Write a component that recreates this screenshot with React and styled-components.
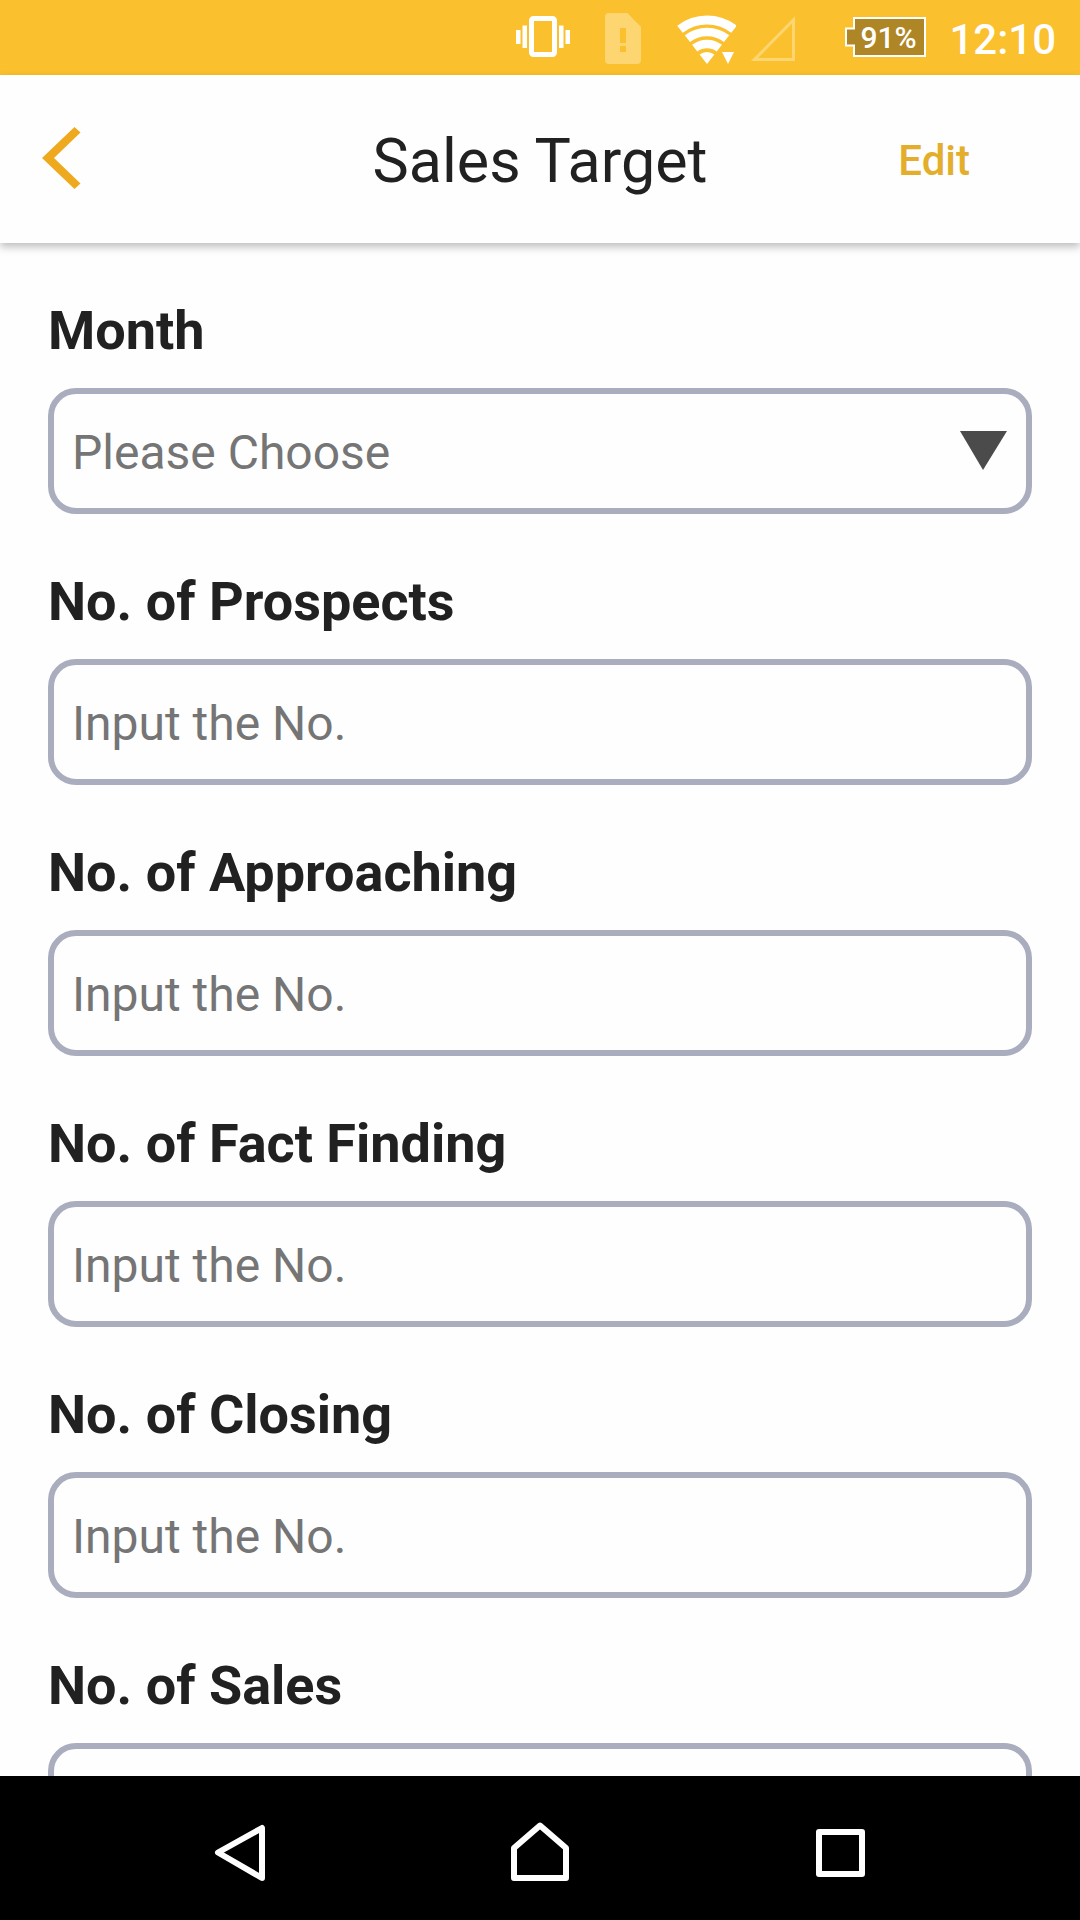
import React from 'react';
import styled, { createGlobalStyle } from 'styled-components';

const GlobalStyle = createGlobalStyle`
  *, *::before, *::after { box-sizing: border-box; }
  body {
    margin: 0;
    background: #fefefe;
    color: #212121;
    font-family: Roboto, "Liberation Sans", sans-serif;
  }
`;

const Screen = styled.div`
  display: flex;
  flex-direction: column;
  height: 100vh;
`;

const StatusBar = styled.div`
  flex: none;
  display: flex;
  align-items: center;
  justify-content: flex-end;
  gap: 10px;
  height: 75px;
  padding-right: 24px;
  background: #fbc02d;
  color: #fff;
`;

const StatusIcon = styled.svg`
  display: block;
  flex: none;
  height: 75px;
`;

const Battery = styled.div`
  position: relative;
  flex: none;
  display: flex;
  align-items: center;
  width: 109px;
  height: 75px;
  padding-left: 30px;
  font-size: 30px;
  font-weight: 500;
  line-height: 36px;
`;

const BatteryShape = styled.svg`
  position: absolute;
  inset: 0;
`;

const BatteryLevel = styled.span`
  position: relative;
`;

const Clock = styled.time`
  padding-top: 4px;
  font-size: 42px;
  font-weight: 500;
  line-height: 48px;
`;

const Header = styled.header`
  position: relative;
  z-index: 1;
  flex: none;
  display: grid;
  grid-template-columns: 1fr auto 1fr;
  align-items: center;
  height: 168px;
  padding-top: 4px;
  background: #fefefe;
  box-shadow: 0 4px 8px rgba(0, 0, 0, 0.25);
`;

const BackButton = styled.button`
  justify-self: start;
  margin-left: 24px;
  padding: 0;
  border: 0;
  background: none;
  svg { display: block; }
`;

const Title = styled.h1`
  margin: 0;
  font-size: 61px;
  font-weight: 400;
  line-height: 72px;
`;

const EditButton = styled.button`
  justify-self: end;
  margin-right: 110px;
  padding: 0;
  border: 0;
  background: none;
  color: #e3ae2b;
  font: 500 42px/48px Roboto, "Liberation Sans", sans-serif;
`;

const Form = styled.form`
  flex: 1;
  min-height: 0;
  display: flex;
  flex-direction: column;
  gap: 56px;
  padding: 56px 48px;
  overflow-y: auto;
  scrollbar-width: none;
`;

const Field = styled.div`
  flex: none;
  display: flex;
  flex-direction: column;
  gap: 25px;
`;

const Label = styled.label`
  font-size: 54px;
  font-weight: 700;
  line-height: 64px;
`;

const controlStyle = `
  display: block;
  width: 100%;
  height: 126px;
  margin: 0;
  border: 6px solid #a9adbd;
  border-radius: 28px;
  background: transparent;
  font: 400 48px/56px Roboto, "Liberation Sans", sans-serif;
  outline: none;
`;

const Input = styled.input`
  ${controlStyle}
  padding: 2px 18px 0;
  color: #212121;
  &::placeholder { color: #757575; opacity: 1; }
`;

const SelectBox = styled.div`
  position: relative;
`;

const Select = styled.select`
  ${controlStyle}
  padding: 4px 18px 0;
  appearance: none;
  color: #757575;
`;

const SelectArrow = styled.svg`
  position: absolute;
  top: 43px;
  right: 24px;
  pointer-events: none;
`;

const NavBar = styled.nav`
  flex: none;
  display: flex;
  height: 144px;
  padding: 0 90px;
  background: #000;
`;

const NavButton = styled.button`
  flex: 1;
  display: flex;
  align-items: center;
  justify-content: center;
  padding: 0;
  border: 0;
  background: none;
`;

const navIcons = [
  { name: 'Back', d: 'M14 40.5 58 16V66Z' },
  { name: 'Home', d: 'M10 36 36 13.5 62 36V66H10Z' },
  { name: 'Recent apps', d: 'M15 20H58V62H15Z' },
];

const countFields = [
  { id: 'prospects', label: 'No. of Prospects' },
  { id: 'approaching', label: 'No. of Approaching' },
  { id: 'fact-finding', label: 'No. of Fact Finding' },
  { id: 'closing', label: 'No. of Closing' },
  { id: 'sales', label: 'No. of Sales' },
];

const months = [
  'January', 'February', 'March', 'April', 'May', 'June', 'July',
  'August', 'September', 'October', 'November', 'December',
];

function StatusIcons() {
  return (
    <>
      <StatusIcon width="68" viewBox="0 0 68 75" fill="#fff" aria-hidden="true">
        <rect x="21.5" y="18.5" width="23" height="36" rx="2" fill="none" stroke="#fff" strokeWidth="5" />
        <rect x="6" y="30" width="4.5" height="14" />
        <rect x="12.5" y="25.5" width="4.5" height="22.5" />
        <rect x="49" y="25.5" width="4.5" height="22.5" />
        <rect x="55.5" y="30" width="4.5" height="14" />
      </StatusIcon>
      <StatusIcon width="64" viewBox="0 0 64 75" fill="#fdd571" aria-hidden="true">
        <path
          fillRule="evenodd"
          d="M21 13H39.5L53 27V60Q53 64 49 64H21Q17 64 17 60V17Q17 13 21 13ZM32 28V43H38V28ZM32 46V52H38V46Z"
        />
      </StatusIcon>
      <StatusIcon width="74" viewBox="0 0 74 75" fill="none" stroke="#fff" aria-hidden="true">
        <path d="M18 29.2A44 44 0 0 1 72 29.2" strokeWidth="9" />
        <path d="M25.4 38.7A32 32 0 0 1 64.6 38.7" strokeWidth="8.5" />
        <path d="M32.7 48.2A20 20 0 0 1 57.3 48.2" strokeWidth="8.5" />
        <path d="M45 64 37.6 54.5A12 12 0 0 1 52.4 54.5Z" fill="#fff" stroke="none" />
        <path d="M60 52H72L66 64Z" fill="#fff" stroke="none" />
      </StatusIcon>
      <StatusIcon width="74" viewBox="0 0 74 75" fill="none" stroke="#fdd571" strokeWidth="3" aria-hidden="true">
        <path d="M8.5 59.5H47.5V20Z" />
      </StatusIcon>
    </>
  );
}

export default function App() {
  return (
    <>
      <GlobalStyle />
      <Screen>
        <StatusBar>
          <StatusIcons />
          <Battery>
            <BatteryShape width="110" height="75" viewBox="0 0 110 75" aria-hidden="true">
              <path d="M24 18H95V56H24V45.5H16V28.5H24Z" fill="#ae8626" stroke="#fff" strokeWidth="2" />
            </BatteryShape>
            <BatteryLevel>91%</BatteryLevel>
          </Battery>
          <Clock>12:10</Clock>
        </StatusBar>
        <Header>
          <BackButton type="button" aria-label="Go back">
            <svg width="72" height="72" viewBox="0 0 72 72" fill="#efa91f">
              <path d="M18 33 50.5 2 56.5 7.5 30 33 56.5 58.5 50.5 64Z" />
            </svg>
          </BackButton>
          <Title>Sales Target</Title>
          <EditButton type="button">Edit</EditButton>
        </Header>
        <Form>
          <Field>
            <Label htmlFor="month">Month</Label>
            <SelectBox>
              <Select id="month" defaultValue="">
                <option value="">Please Choose</option>
                {months.map((month) => (
                  <option key={month}>{month}</option>
                ))}
              </Select>
              <SelectArrow width="48" height="40" viewBox="0 0 48 40" aria-hidden="true">
                <path d="M0 0H47L23 39Z" fill="#4b4b4b" />
              </SelectArrow>
            </SelectBox>
          </Field>
          {countFields.map(({ id, label }) => (
            <Field key={id}>
              <Label htmlFor={id}>{label}</Label>
              <Input id={id} type="text" inputMode="numeric" placeholder="Input the No." />
            </Field>
          ))}
        </Form>
        <NavBar>
          {navIcons.map(({ name, d }) => (
            <NavButton key={name} type="button" aria-label={name}>
              <svg width="72" height="72" viewBox="0 0 72 72" fill="none" stroke="#fff" strokeWidth="6" strokeLinejoin="round">
                <path d={d} />
              </svg>
            </NavButton>
          ))}
        </NavBar>
      </Screen>
    </>
  );
}
